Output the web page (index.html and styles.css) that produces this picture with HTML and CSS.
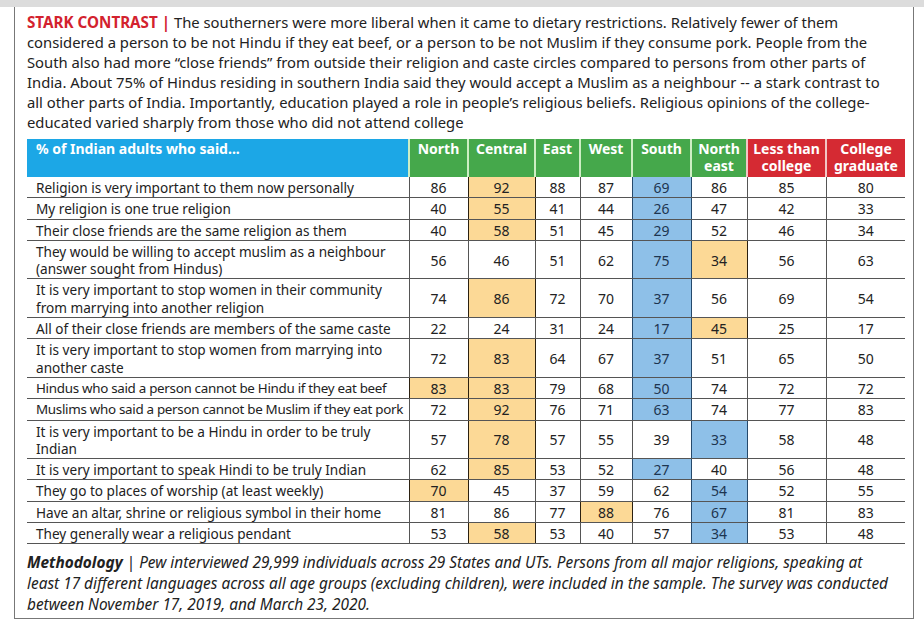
FILE: index.html
```html
<!DOCTYPE html>
<html lang="en">
<head>
    <meta charset="UTF-8">
    <meta name="viewport" content="width=device-width, initial-scale=1.0">
    <title>Stark contrast</title>
    <link rel="stylesheet" href="styles.css">
</head>
<body>
    <div class="topbar"></div>

    <div class="frame">
        <p class="intro">
            <span class="kicker">STARK CONTRAST |</span> The southerners were more liberal when it came to dietary restrictions. Relatively fewer of them<br>
            considered a person to be not Hindu if they eat beef, or a person to be not Muslim if they consume pork. People from the<br>
            South also had more “close friends” from outside their religion and caste circles compared to persons from other parts of<br>
            India. About 75% of Hindus residing in southern India said they would accept a Muslim as a neighbour -- a stark contrast to<br>
            all other parts of India. Importantly, education played a role in people’s religious beliefs. Religious opinions of the college-<br>
            educated varied sharply from those who did not attend college
        </p>

        <table class="survey">
            <colgroup>
                <col class="c-label">
                <col style="width:59px">
                <col style="width:67px">
                <col style="width:45px">
                <col style="width:52px">
                <col style="width:59px">
                <col style="width:56px">
                <col style="width:79px">
                <col style="width:79px">
            </colgroup>
            <thead>
                <tr>
                    <th class="h-label">% of Indian adults who said...</th>
                    <th class="h-region">North</th>
                    <th class="h-region">Central</th>
                    <th class="h-region">East</th>
                    <th class="h-region">West</th>
                    <th class="h-region">South</th>
                    <th class="h-region">North<br>east</th>
                    <th class="h-edu">Less than<br>college</th>
                    <th class="h-edu">College<br>graduate</th>
                </tr>
            </thead>
            <tbody>
                <tr>
                    <td>Religion is very important to them now personally</td>
                    <td>86</td><td class="y">92</td><td>88</td><td>87</td><td class="b">69</td><td>86</td><td>85</td><td>80</td>
                </tr>
                <tr>
                    <td>My religion is one true religion</td>
                    <td>40</td><td class="y">55</td><td>41</td><td>44</td><td class="b">26</td><td>47</td><td>42</td><td>33</td>
                </tr>
                <tr>
                    <td>Their close friends are the same religion as them</td>
                    <td>40</td><td class="y">58</td><td>51</td><td>45</td><td class="b">29</td><td>52</td><td>46</td><td>34</td>
                </tr>
                <tr>
                    <td>They would be willing to accept muslim as a neighbour<br>(answer sought from Hindus)</td>
                    <td>56</td><td>46</td><td>51</td><td>62</td><td class="b">75</td><td class="y">34</td><td>56</td><td>63</td>
                </tr>
                <tr>
                    <td>It is very important to stop women in their community<br>from marrying into another religion</td>
                    <td>74</td><td class="y">86</td><td>72</td><td>70</td><td class="b">37</td><td>56</td><td>69</td><td>54</td>
                </tr>
                <tr>
                    <td>All of their close friends are members of the same caste</td>
                    <td>22</td><td>24</td><td>31</td><td>24</td><td class="b">17</td><td class="y">45</td><td>25</td><td>17</td>
                </tr>
                <tr>
                    <td>It is very important to stop women from marrying into<br>another caste</td>
                    <td>72</td><td class="y">83</td><td>64</td><td>67</td><td class="b">37</td><td>51</td><td>65</td><td>50</td>
                </tr>
                <tr>
                    <td class="long">Hindus who said a person cannot be Hindu if they eat beef</td>
                    <td class="y">83</td><td class="y">83</td><td>79</td><td>68</td><td class="b">50</td><td>74</td><td>72</td><td>72</td>
                </tr>
                <tr>
                    <td class="long">Muslims who said a person cannot be Muslim if they eat pork</td>
                    <td>72</td><td class="y">92</td><td>76</td><td>71</td><td class="b">63</td><td>74</td><td>77</td><td>83</td>
                </tr>
                <tr>
                    <td>It is very important to be a Hindu in order to be truly<br>Indian</td>
                    <td>57</td><td class="y">78</td><td>57</td><td>55</td><td>39</td><td class="b">33</td><td>58</td><td>48</td>
                </tr>
                <tr>
                    <td>It is very important to speak Hindi to be truly Indian</td>
                    <td>62</td><td class="y">85</td><td>53</td><td>52</td><td class="b">27</td><td>40</td><td>56</td><td>48</td>
                </tr>
                <tr>
                    <td>They go to places of worship (at least weekly)</td>
                    <td class="y">70</td><td>45</td><td>37</td><td>59</td><td>62</td><td class="b">54</td><td>52</td><td>55</td>
                </tr>
                <tr>
                    <td>Have an altar, shrine or religious symbol in their home</td>
                    <td>81</td><td>86</td><td>77</td><td class="y">88</td><td>76</td><td class="b">67</td><td>81</td><td>83</td>
                </tr>
                <tr>
                    <td>They generally wear a religious pendant</td>
                    <td>53</td><td class="y">58</td><td>53</td><td>40</td><td>57</td><td class="b">34</td><td>53</td><td>48</td>
                </tr>
            </tbody>
        </table>

        <p class="method">
            <b>Methodology</b> <span class="bar">|</span> Pew interviewed 29,999 individuals across 29 States and UTs. Persons from all major religions, speaking at<br>
            least 17 different languages across all age groups (excluding children), were included in the sample. The survey was conducted<br>
            between November 17, 2019, and March 23, 2020.
        </p>
    </div>
</body>
</html>
```

FILE: styles.css
```css
html, body {
    margin: 0;
    padding: 0;
    background: #fff;
    color: #222;
    font-family: "Noto Sans", "Open Sans", sans-serif;
}

.topbar {
    height: 7px;
    background-color: #dcdcdc;
}

.frame {
    width: 900px;
    height: 612px;
    margin-left: 14px;
    padding: 0 0 0 12px;
    border: 1px solid #777;
    border-top: none;
    box-sizing: border-box;
}

.intro {
    margin: 0;
    padding-top: 5px;
    font-size: 14.8px;
    line-height: 20px;
    white-space: nowrap;
}

.kicker {
    color: #d3222e;
    font-weight: bold;
    font-size: 15.2px;
}

.survey {
    width: 878px;
    margin-top: 7px;
    border-collapse: collapse;
    table-layout: fixed;
    font-size: 13.6px;
}

.survey th {
    padding: 1px 2px 2px;
    height: 35px;
    line-height: 17px;
    font-size: 14px;
    color: #fff;
    font-weight: bold;
    text-align: center;
    vertical-align: top;
    border-left: 2px solid #cdeec4;
}

.survey th.h-label {
    text-align: left;
    padding-left: 9px;
    background-color: #1ca7e6;
    border-left: none;
}

.survey th.h-region {
    background-color: #45a84b;
}

.survey th.h-edu {
    background-color: #d52a33;
    border-left-color: #f2c6c6;
}

.survey td {
    padding: 2px 0 1px;
    line-height: 17.3px;
    font-size: 14px;
    text-align: center;
    white-space: nowrap;
    border-left: 1px solid #555;
    border-bottom: 1px solid #555;
}

.survey td:first-child {
    font-size: 13.6px;
    text-align: left;
    padding-left: 9px;
    border-left: none;
}

/* the two longest labels need a tighter setting to fit the column */
.survey td.long {
    font-size: 13.4px;
    letter-spacing: -0.3px;
}

.survey td.y {
    background-color: #fcd996;
    border-left-color: #2b2010;
    border-right: 1px solid #2b2010;
}

.survey td.b {
    background-color: #8ec0e8;
    color: #1d3550;
    border-left-color: #25496b;
    border-right: 1px solid #25496b;
}

.method {
    margin: 8px 0 0;
    font-size: 15.4px;
    line-height: 21px;
    font-style: italic;
    white-space: nowrap;
}

.method .bar {
    font-style: normal;
}
```
